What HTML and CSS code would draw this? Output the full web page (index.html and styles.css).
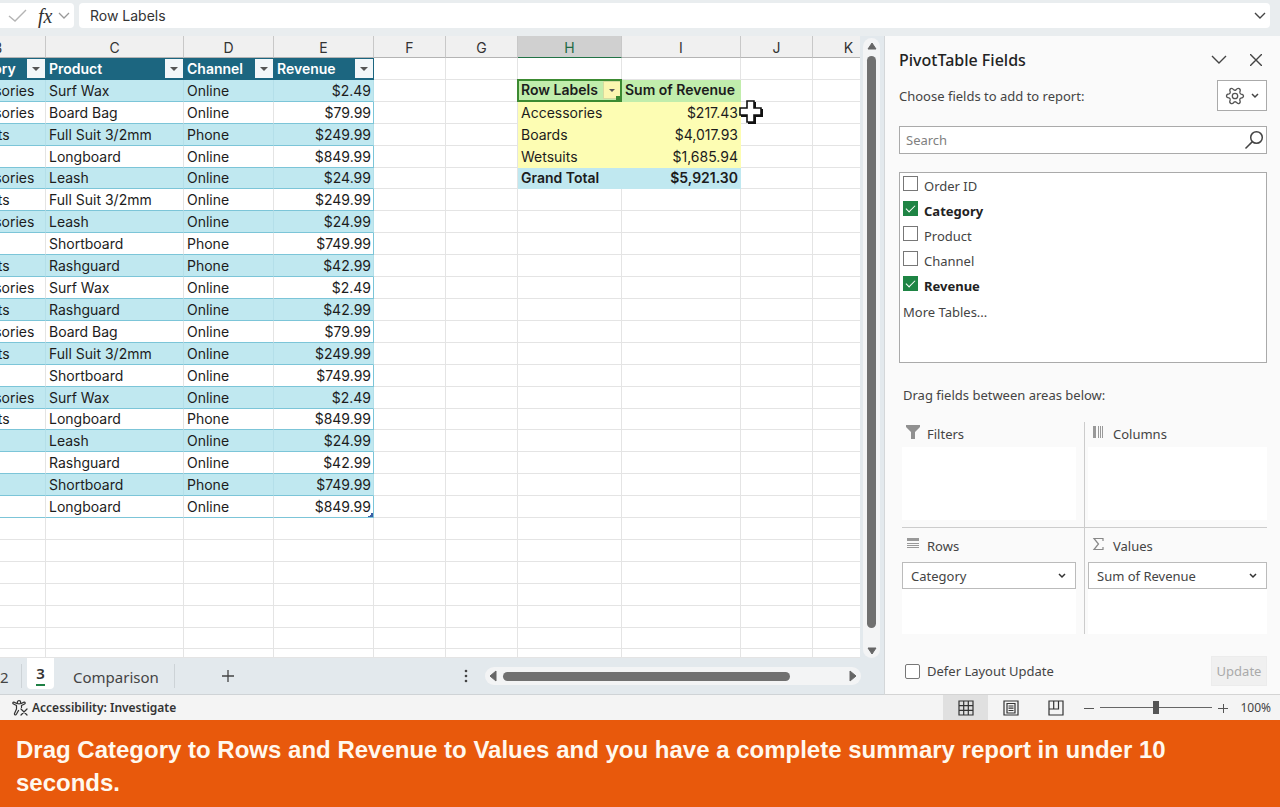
FILE: index.html
```
<!DOCTYPE html>
<html lang="en">
<head>
    <meta charset="utf-8">
    <title>PivotTable Fields</title>
    <link rel="stylesheet" href="styles.css">
</head>
<body>
    <div class="app">
        <header class="formula-bar">
            <div class="formula-bar__tools">
                <button class="icon-button" aria-label="Enter">
                    <svg width="20" height="14" viewBox="0 0 20 14" fill="none" stroke="#b4b4b4" stroke-width="1.4"><path d="M1 7l6 5L18 1"/></svg>
                </button>
                <button class="formula-bar__fx" aria-label="Insert function">fx</button>
                <button class="icon-button" aria-label="More functions">
                    <svg width="12" height="8" viewBox="0 0 12 8" fill="none" stroke="#999" stroke-width="1.3"><path d="M1 1l5 5 5-5"/></svg>
                </button>
            </div>
            <div class="formula-bar__field">
                <input type="text" class="formula-bar__input" value="Row Labels" aria-label="Formula bar">
                <button class="icon-button" aria-label="Expand formula bar">
                    <svg width="12" height="8" viewBox="0 0 12 8" fill="none" stroke="#444" stroke-width="1.4"><path d="M1 1l5 5 5-5"/></svg>
                </button>
            </div>
        </header>

        <div class="workspace">
            <div class="workbook">
                <div class="sheet-area">
                    <div class="sheet-view">
                        <table class="sheet">
                            <colgroup>
                                <col class="sheet__col-b"><col class="sheet__col-c"><col class="sheet__col-d"><col class="sheet__col-e">
                                <col class="sheet__col-std"><col class="sheet__col-std"><col class="sheet__col-h"><col class="sheet__col-i">
                                <col class="sheet__col-std"><col class="sheet__col-std">
                            </colgroup>
                            <thead>
                                <tr><th>B</th><th>C</th><th>D</th><th>E</th><th>F</th><th>G</th><th class="sheet__letter--active">H</th><th>I</th><th>J</th><th>K</th></tr>
                            </thead>
                            <tbody>
                                <tr class="list-head">
                                    <th><div class="list-head__cell">Category<button class="filter" aria-label="Filter Category"></button></div></th>
                                    <th><div class="list-head__cell">Product<button class="filter" aria-label="Filter Product"></button></div></th>
                                    <th><div class="list-head__cell">Channel<button class="filter" aria-label="Filter Channel"></button></div></th>
                                    <th><div class="list-head__cell">Revenue<button class="filter" aria-label="Filter Revenue"></button></div></th>
                                    <td></td><td></td><td></td><td></td><td></td><td></td>
                                </tr>
                                <tr class="list-row list-row--band"><td>Accessories</td><td>Surf Wax</td><td>Online</td><td>$2.49</td><td></td><td></td>
                                    <td class="pivot-head pivot-head--selected"><div class="list-head__cell">Row Labels<button class="filter filter--pivot" aria-label="Filter row labels"></button></div></td>
                                    <td class="pivot-head">Sum of Revenue</td><td></td><td></td></tr>
                                <tr class="list-row"><td>Accessories</td><td>Board Bag</td><td>Online</td><td>$79.99</td><td></td><td></td><td class="pivot">Accessories</td><td class="pivot pivot--num">$217.43</td><td></td><td></td></tr>
                                <tr class="list-row list-row--band"><td>Wetsuits</td><td>Full Suit 3/2mm</td><td>Phone</td><td>$249.99</td><td></td><td></td><td class="pivot">Boards</td><td class="pivot pivot--num">$4,017.93</td><td></td><td></td></tr>
                                <tr class="list-row"><td>Boards</td><td>Longboard</td><td>Online</td><td>$849.99</td><td></td><td></td><td class="pivot">Wetsuits</td><td class="pivot pivot--num">$1,685.94</td><td></td><td></td></tr>
                                <tr class="list-row list-row--band"><td>Accessories</td><td>Leash</td><td>Online</td><td>$24.99</td><td></td><td></td><td class="pivot pivot--total">Grand Total</td><td class="pivot pivot--total pivot--num">$5,921.30</td><td></td><td></td></tr>
                                <tr class="list-row"><td>Wetsuits</td><td>Full Suit 3/2mm</td><td>Online</td><td>$249.99</td><td></td><td></td><td></td><td></td><td></td><td></td></tr>
                                <tr class="list-row list-row--band"><td>Accessories</td><td>Leash</td><td>Online</td><td>$24.99</td><td></td><td></td><td></td><td></td><td></td><td></td></tr>
                                <tr class="list-row"><td>Boards</td><td>Shortboard</td><td>Phone</td><td>$749.99</td><td></td><td></td><td></td><td></td><td></td><td></td></tr>
                                <tr class="list-row list-row--band"><td>Wetsuits</td><td>Rashguard</td><td>Phone</td><td>$42.99</td><td></td><td></td><td></td><td></td><td></td><td></td></tr>
                                <tr class="list-row"><td>Accessories</td><td>Surf Wax</td><td>Online</td><td>$2.49</td><td></td><td></td><td></td><td></td><td></td><td></td></tr>
                                <tr class="list-row list-row--band"><td>Wetsuits</td><td>Rashguard</td><td>Online</td><td>$42.99</td><td></td><td></td><td></td><td></td><td></td><td></td></tr>
                                <tr class="list-row"><td>Accessories</td><td>Board Bag</td><td>Online</td><td>$79.99</td><td></td><td></td><td></td><td></td><td></td><td></td></tr>
                                <tr class="list-row list-row--band"><td>Wetsuits</td><td>Full Suit 3/2mm</td><td>Online</td><td>$249.99</td><td></td><td></td><td></td><td></td><td></td><td></td></tr>
                                <tr class="list-row"><td>Boards</td><td>Shortboard</td><td>Online</td><td>$749.99</td><td></td><td></td><td></td><td></td><td></td><td></td></tr>
                                <tr class="list-row list-row--band"><td>Accessories</td><td>Surf Wax</td><td>Online</td><td>$2.49</td><td></td><td></td><td></td><td></td><td></td><td></td></tr>
                                <tr class="list-row"><td>Wetsuits</td><td>Longboard</td><td>Phone</td><td>$849.99</td><td></td><td></td><td></td><td></td><td></td><td></td></tr>
                                <tr class="list-row list-row--band"><td></td><td>Leash</td><td>Online</td><td>$24.99</td><td></td><td></td><td></td><td></td><td></td><td></td></tr>
                                <tr class="list-row"><td></td><td>Rashguard</td><td>Online</td><td>$42.99</td><td></td><td></td><td></td><td></td><td></td><td></td></tr>
                                <tr class="list-row list-row--band"><td></td><td>Shortboard</td><td>Phone</td><td>$749.99</td><td></td><td></td><td></td><td></td><td></td><td></td></tr>
                                <tr class="list-row"><td></td><td>Longboard</td><td>Online</td><td class="list-row__end">$849.99</td><td></td><td></td><td></td><td></td><td></td><td></td></tr>
                                <tr><td></td><td></td><td></td><td></td><td></td><td></td><td></td><td></td><td></td><td></td></tr>
                                <tr><td></td><td></td><td></td><td></td><td></td><td></td><td></td><td></td><td></td><td></td></tr>
                                <tr><td></td><td></td><td></td><td></td><td></td><td></td><td></td><td></td><td></td><td></td></tr>
                                <tr><td></td><td></td><td></td><td></td><td></td><td></td><td></td><td></td><td></td><td></td></tr>
                                <tr><td></td><td></td><td></td><td></td><td></td><td></td><td></td><td></td><td></td><td></td></tr>
                                <tr><td></td><td></td><td></td><td></td><td></td><td></td><td></td><td></td><td></td><td></td></tr>
                                <tr class="sheet__partial"><td></td><td></td><td></td><td></td><td></td><td></td><td></td><td></td><td></td><td></td></tr>
                            </tbody>
                        </table>
                        <svg class="cell-cursor" width="26" height="27" viewBox="0 0 26 27"><path d="M10 3h8v7h7v8h-7v7h-8v-7H3v-8h7z" fill="#111"/><path d="M9 2h7v7h7v7h-7v7H9v-7H2V9h7z" fill="#fff" stroke="#111" stroke-width="1.6"/></svg>
                    </div>
                    <div class="scroll scroll--vertical">
                        <button class="icon-button" aria-label="Scroll up"><svg width="10" height="8" viewBox="0 0 10 8"><path d="M5 1l4 6H1z" fill="#666" stroke="#666" stroke-linejoin="round"/></svg></button>
                        <div class="scroll__thumb"></div>
                        <button class="icon-button" aria-label="Scroll down"><svg width="10" height="8" viewBox="0 0 10 8"><path d="M5 7l4-6H1z" fill="#666" stroke="#666" stroke-linejoin="round"/></svg></button>
                    </div>
                </div>

                <div class="tab-bar">
                    <nav class="tabs">
                        <button class="tabs__item tabs__item--first">2</button>
                        <button class="tabs__item tabs__item--active"><span class="tabs__name">3</span></button>
                        <button class="tabs__item">Comparison</button>
                    </nav>
                    <button class="icon-button tab-bar__add" aria-label="New sheet">
                        <svg width="14" height="14" viewBox="0 0 14 14" stroke="#444" stroke-width="1.3"><path d="M7 1v12M1 7h12"/></svg>
                    </button>
                    <svg class="tab-bar__grip" width="4" height="14" viewBox="0 0 4 14" fill="#444"><circle cx="2" cy="2" r="1.3"/><circle cx="2" cy="7" r="1.3"/><circle cx="2" cy="12" r="1.3"/></svg>
                    <div class="scroll scroll--horizontal">
                        <button class="icon-button" aria-label="Scroll left"><svg width="8" height="12" viewBox="0 0 8 12"><path d="M1 6l6-5v10z" fill="#666" stroke="#666" stroke-linejoin="round"/></svg></button>
                        <div class="scroll__thumb"></div>
                        <button class="icon-button" aria-label="Scroll right"><svg width="8" height="12" viewBox="0 0 8 12"><path d="M7 6L1 1v10z" fill="#666" stroke="#666" stroke-linejoin="round"/></svg></button>
                    </div>
                </div>
            </div>

            <aside class="panel">
                <div class="panel__header">
                    <h1 class="panel__title">PivotTable Fields</h1>
                    <button class="icon-button" aria-label="Task pane options">
                        <svg width="16" height="10" viewBox="0 0 16 10" fill="none" stroke="#444" stroke-width="1.4"><path d="M1 1l7 7 7-7"/></svg>
                    </button>
                    <button class="icon-button" aria-label="Close">
                        <svg width="12" height="12" viewBox="0 0 12 12" fill="none" stroke="#444" stroke-width="1.4"><path d="M0 0l12 12M12 0L0 12"/></svg>
                    </button>
                </div>
                <div class="panel__intro">
                    <p>Choose fields to add to report:</p>
                    <button class="panel__tools" aria-label="Tools">
                        <svg width="20" height="20" viewBox="0 0 20 20" fill="none" stroke="#555" stroke-width="1.3" stroke-linejoin="round"><path transform="rotate(30 10 10)" d="M7.800 4.200Q8 1.500 10 1.500T12.200 4.200Q12.800 5.500 14.200 5.300Q16.500 4.300 17.400 5.800T16.100 8.900Q15.300 10 16.100 11.100Q18.300 12.600 17.400 14.200T14.200 14.700Q12.800 14.500 12.200 15.800Q12 18.500 10 18.500T7.800 15.800Q7.200 14.500 5.800 14.700Q3.500 15.700 2.600 14.200T3.900 11.100Q4.700 10 3.900 8.900Q1.700 7.400 2.600 5.800T5.800 5.300Q7.200 5.500 7.800 4.200z"/><circle cx="10" cy="10" r="2.700"/></svg>
                        <svg width="8" height="6" viewBox="0 0 8 6" fill="none" stroke="#444" stroke-width="1.5"><path d="M1 1l3 3 3-3"/></svg>
                    </button>
                </div>
                <div class="search">
                    <input type="search" class="search__input" placeholder="Search" aria-label="Search fields">
                    <button class="icon-button" aria-label="Search">
                        <svg width="20" height="20" viewBox="0 0 20 20" fill="none" stroke="#444" stroke-width="1.5"><circle cx="12.500" cy="7.500" r="5.800"/><path d="M8.400 11.600L1.500 18.500"/></svg>
                    </button>
                </div>
                <div class="fields">
                    <label class="fields__item"><input type="checkbox" class="checkbox">Order ID</label>
                    <label class="fields__item fields__item--on"><input type="checkbox" class="checkbox" checked>Category</label>
                    <label class="fields__item"><input type="checkbox" class="checkbox">Product</label>
                    <label class="fields__item"><input type="checkbox" class="checkbox">Channel</label>
                    <label class="fields__item fields__item--on"><input type="checkbox" class="checkbox" checked>Revenue</label>
                    <a class="fields__more" href="#">More Tables...</a>
                </div>
                <p class="panel__hint">Drag fields between areas below:</p>
                <div class="areas">
                    <section class="area">
                        <h2 class="area__title">
                            <svg width="14" height="14" viewBox="0 0 14 14" fill="#909090"><path d="M0 0h14v2L9 7v7H5V7L0 2z"/></svg>Filters
                        </h2>
                        <div class="area__drop"></div>
                    </section>
                    <section class="area">
                        <h2 class="area__title">
                            <svg width="14" height="14" viewBox="0 0 14 14" fill="#999"><path d="M1 1h3v12H1zM6 1h1v12H6zM8 1h1v12H8zM10 1h1v12h-1z"/></svg>Columns
                        </h2>
                        <div class="area__drop"></div>
                    </section>
                    <section class="area">
                        <h2 class="area__title">
                            <svg width="14" height="14" viewBox="0 0 14 14" fill="#999"><path d="M1 1h12v3H1zM1 6h12v1H1zM1 8h12v1H1zM1 10h12v1H1z"/></svg>Rows
                        </h2>
                        <div class="area__drop">
                            <div class="area__field">
                                <select class="area__select" aria-label="Rows field"><option>Category</option></select>
                                <svg class="area__chevron" width="8" height="6" viewBox="0 0 8 6" fill="none" stroke="#333" stroke-width="1.5"><path d="M1 1l3 3 3-3"/></svg>
                            </div>
                        </div>
                    </section>
                    <section class="area">
                        <h2 class="area__title">
                            <svg width="14" height="14" viewBox="0 0 14 14" fill="none" stroke="#888" stroke-width="1.2"><path d="M11 4V1.500H2L6.500 7 2 12.500h9V10"/></svg>Values
                        </h2>
                        <div class="area__drop">
                            <div class="area__field">
                                <select class="area__select" aria-label="Values field"><option>Sum of Revenue</option></select>
                                <svg class="area__chevron" width="8" height="6" viewBox="0 0 8 6" fill="none" stroke="#333" stroke-width="1.5"><path d="M1 1l3 3 3-3"/></svg>
                            </div>
                        </div>
                    </section>
                </div>
                <div class="panel__footer">
                    <label class="defer"><input type="checkbox" class="checkbox checkbox--round">Defer Layout Update</label>
                    <button class="panel__update" disabled>Update</button>
                </div>
            </aside>
        </div>

        <footer class="status-bar">
            <button class="status-bar__check">
                <svg width="16" height="16" viewBox="0 0 16 16" fill="none" stroke="#333" stroke-width="1.2" stroke-linecap="round" stroke-linejoin="round"><circle cx="7" cy="2.300" r="1.700"/><path d="M5.200 3.600L2.200 2.200C.8 1.800.3 3.500 1.500 4L4.500 5.500V9L2.500 13.500c-.4 1.400 1.200 2 1.900.8L6.500 10.500M8.800 3.600l3-1.400c1.400-.4 1.900 1.300.7 1.800L9.500 5.500v2M9 9l6 6M15 9l-6 6"/></svg>
                Accessibility: Investigate
            </button>
            <div class="views">
                <button class="views__item views__item--active" aria-label="Normal view">
                    <svg width="16" height="16" viewBox="0 0 16 16" fill="none" stroke="#333" stroke-width="1.2"><path d="M1 1h14v14H1zM5.700 1v14M10.300 1v14M1 5.700h14M1 10.300h14"/></svg>
                </button>
                <button class="views__item" aria-label="Page layout view">
                    <svg width="16" height="16" viewBox="0 0 16 16" fill="none" stroke="#333" stroke-width="1.2"><path d="M1 1h14v14H1zM4 3.500h8v9.500H4zM5.500 6h5M5.500 8.200h5M5.500 10.500h5"/></svg>
                </button>
                <button class="views__item" aria-label="Page break view">
                    <svg width="16" height="16" viewBox="0 0 16 16" fill="none" stroke="#333" stroke-width="1.2"><path d="M1 1h14v14H1zM1 9h9.500V1M5.700 1v8"/></svg>
                </button>
            </div>
            <div class="zoom">
                <button class="icon-button" aria-label="Zoom out"><svg width="10" height="10" viewBox="0 0 10 10" stroke="#555"><path d="M0 5.500h10"/></svg></button>
                <input type="range" class="zoom__slider" min="0" max="200" value="100" aria-label="Zoom">
                <button class="icon-button" aria-label="Zoom in"><svg width="10" height="10" viewBox="0 0 10 10" stroke="#555"><path d="M0 5.500h10M5.500 1v9"/></svg></button>
                <span class="zoom__value">100%</span>
            </div>
        </footer>

        <p class="caption">Drag Category to Rows and Revenue to Values and you have a complete summary report in under 10 seconds.</p>
    </div>
</body>
</html>
```
FILE: styles.css
```
* {
    margin: 0;
    padding: 0;
    box-sizing: border-box;
}

body {
    font-family: "Noto Sans", sans-serif;
    font-size: 13px;
    color: #444;
}

button,
input,
select {
    font: inherit;
    color: inherit;
    background: none;
    border: none;
    outline: none;
}

svg {
    display: block;
    flex: none;
}

.icon-button {
    display: flex;
    flex: none;
}

.app {
    height: 100vh;
    display: flex;
    flex-direction: column;
    overflow: hidden;
}

/* Formula bar */

.formula-bar {
    display: flex;
    gap: 5px;
    padding: 3px 10px 8px 0;
    background: #e9edef;
}

.formula-bar__tools {
    display: flex;
    align-items: center;
    gap: 10px;
    width: 74px;
    height: 25px;
    padding: 0 2px 0 8px;
    background: #fff;
    border-radius: 0 4px 4px 0;
}

.formula-bar__fx {
    font: italic 400 20px/20px "Liberation Serif", serif;
    color: #333;
}

.formula-bar__tools .formula-bar__fx + .icon-button {
    margin-left: -4px;
}

.formula-bar__field {
    flex: 1;
    display: flex;
    align-items: center;
    height: 25px;
    padding: 0 4px 0 11px;
    background: #fff;
    border-radius: 4px;
}

.formula-bar__input {
    flex: 1;
    font-family: Inter, sans-serif;
    font-size: 14px;
    color: #333;
}

/* Workbook */

.workspace {
    flex: 1;
    min-height: 0;
    display: flex;
}

.workbook {
    flex: 1;
    min-width: 0;
    display: flex;
    flex-direction: column;
    background: #e3e9ed;
}

.sheet-area {
    flex: 1;
    min-height: 0;
    display: flex;
}

.sheet-view {
    flex: 1;
    position: relative;
    overflow: hidden;
    background: #fff;
}

/* The view is scrolled halfway into column B */
.sheet {
    width: 935px;
    height: 100%;
    margin-left: -50px;
    table-layout: fixed;
    border-spacing: 0;
    font-family: Inter, sans-serif;
    font-size: 14px;
    line-height: 18px;
    color: #1c1c1c;
}

.sheet__col-b { width: 96px; }
.sheet__col-c { width: 138px; }
.sheet__col-d { width: 90px; }
.sheet__col-e { width: 100px; }
.sheet__col-std { width: 72px; }
.sheet__col-h { width: 104px; }
.sheet__col-i { width: 119px; }

.sheet tr {
    height: 21px;
}

.sheet thead tr {
    height: 22px;
}

.sheet .sheet__partial {
    height: 8px;
}

.sheet td {
    padding: 1px 3px 0;
    border-right: 1px solid #e4e4e4;
    border-bottom: 1px solid #e4e4e4;
    white-space: nowrap;
}

.sheet thead th {
    padding-top: 2px;
    font-weight: 400;
    color: #333;
    background: #f0f0f0;
    border-right: 1px solid #c8c8c8;
    border-bottom: 1px solid #b4b4b4;
}

.sheet thead .sheet__letter--active {
    color: #1f6b45;
    background: #d0d0d0;
    border-bottom-color: #217346;
}

.list-head th {
    padding: 1px 1px 0 3px;
    font-weight: 600;
    color: #fff;
    background: #1c6680;
    border-bottom: 1px solid #1c6680;
}

.list-head__cell {
    display: flex;
    align-items: center;
    justify-content: space-between;
}

.filter {
    display: flex;
    align-items: center;
    justify-content: center;
    width: 18px;
    height: 19px;
    background: #f3f7f9;
}

.filter::before {
    content: "";
    border: 4px solid transparent;
    border-top-color: #555;
    border-bottom: none;
}

.sheet .list-row td:nth-child(-n+4) {
    border-bottom-color: #7cc5d8;
}

.sheet .list-row td:nth-child(4) {
    padding-right: 2px;
    text-align: right;
    border-right-color: #7cc5d8;
}

.sheet .list-row--band td:nth-child(-n+4) {
    background: #c0e8f0;
    border-right-color: #b4dfe9;
}

.list-row__end {
    background: linear-gradient(135deg, transparent 50%, #3b5fa5 50%) no-repeat right bottom / 5px 5px;
}

.sheet .pivot-head {
    position: relative;
    padding: 0 0 0 3px;
    font-weight: 600;
    background: #c1edac;
    border-color: #c1edac;
}

.sheet .pivot-head--selected::after {
    content: "";
    position: absolute;
    inset: -1px;
    background: linear-gradient(#3c8a32, #3c8a32) no-repeat right bottom / 4px 4px;
    border: 2px solid #3c8a32;
    pointer-events: none;
}

.filter--pivot {
    height: 18px;
    background: #fbf6b0;
    border: 1px solid #d5dca0;
}

.filter--pivot::before {
    border-width: 3px 3px 0;
}

.sheet .pivot {
    background: #fdfdb3;
    border-color: #fdfdb3;
}

.sheet .pivot--total {
    font-weight: 600;
    background: #c0e8f0;
    border-color: #c0e8f0;
}

.sheet .pivot--num {
    padding-right: 2px;
    text-align: right;
}

.cell-cursor {
    position: absolute;
    left: 738px;
    top: 63px;
}

/* Scroll bars */

.scroll {
    display: flex;
    align-items: center;
    background: #f3f4f5;
    border-radius: 9px;
}

.scroll__thumb {
    background: #707070;
    border-radius: 5px;
}

.scroll--vertical {
    flex-direction: column;
    width: 17px;
    margin: 2px 4px 0 3px;
    padding: 4px 0 3px;
}

.scroll--vertical .scroll__thumb {
    flex: 1;
    width: 9px;
    margin: 6px 0 19px;
}

.scroll--horizontal {
    width: 376px;
    height: 18px;
    margin-right: 23px;
    padding: 0 4px;
}

.scroll--horizontal .scroll__thumb {
    flex: 1;
    height: 9px;
    margin: 0 59px 0 6px;
}

/* Sheet tabs */

.tab-bar {
    display: flex;
    align-items: center;
    height: 37px;
    border-bottom: 1px solid #cfd3d6;
}

.tabs {
    display: flex;
    align-self: stretch;
    align-items: center;
    font-size: 15px;
}

.tabs__item {
    height: 24px;
    padding: 2px 15px 0;
    border-right: 1px solid #cdd3d7;
}

.tabs__item--first {
    width: 22px;
    margin-right: 5px;
    padding: 2px 13px 0 0;
}

.tabs__item--active {
    align-self: flex-start;
    width: 27px;
    height: 31px;
    margin-right: 4px;
    padding: 0;
    font-weight: 600;
    color: #333;
    background: #fff;
    border: none;
    border-radius: 0 0 4px 4px;
}

.tabs__name {
    display: inline-block;
    width: 9px;
    line-height: 22px;
    border-bottom: 2px solid #1e8045;
}

.tab-bar__add {
    margin-left: 46px;
}

.tab-bar__grip {
    margin: 0 17px 0 auto;
}

/* Fields panel */

.panel {
    width: 396px;
    display: flex;
    flex-direction: column;
    padding: 12px 13px 8px 14px;
    background: #fafafa;
    border-left: 1px solid #d4d7d9;
    border-bottom: 1px solid #d4d4d4;
}

.panel__header {
    display: flex;
    align-items: center;
    gap: 23px;
    height: 24px;
    padding-right: 5px;
}

.panel__title {
    flex: 1;
    font-size: 16px;
    font-weight: 500;
    color: #222;
}

.panel__intro {
    display: flex;
    align-items: center;
    justify-content: space-between;
    margin-top: 8px;
}

.panel__tools {
    display: flex;
    align-items: center;
    justify-content: center;
    gap: 6px;
    width: 50px;
    height: 31px;
    background: #fff;
    border: 1px solid #aaa;
}

.search {
    display: flex;
    align-items: center;
    height: 28px;
    margin-top: 15px;
    padding: 0 2px 0 6px;
    background: #fff;
    border: 1px solid #aaa;
}

.search__input {
    flex: 1;
}

.search__input::placeholder {
    color: #808080;
}

.fields {
    display: flex;
    flex-direction: column;
    align-items: flex-start;
    height: 191px;
    margin-top: 18px;
    padding: 1px 3px;
    background: #fff;
    border: 1px solid #aaa;
}

.fields__item {
    display: flex;
    align-items: flex-start;
    gap: 6px;
    height: 25px;
    line-height: 25px;
}

.fields__item--on {
    font-weight: 700;
    color: #222;
}

.fields__more {
    line-height: 26px;
    color: inherit;
    text-decoration: none;
}

.checkbox {
    appearance: none;
    flex: none;
    display: grid;
    justify-content: center;
    width: 15px;
    height: 15px;
    margin-top: 2px;
    background: #fff;
    border: 1px solid #777;
}

.checkbox:checked {
    background: #1e8444;
    border-color: #1e8444;
}

.checkbox:checked::before {
    content: "";
    width: 8px;
    height: 4px;
    margin-top: 3px;
    border: solid #fff;
    border-width: 0 0 1px 1px;
    transform: rotate(-45deg);
}

.checkbox--round {
    margin: 0;
    border-radius: 2px;
}

.panel__hint {
    margin: 22px 0 17px 4px;
    line-height: 20px;
}

.areas {
    flex: 1;
    display: grid;
    grid-template: 1fr 1fr / 183px 1fr;
    margin-left: 3px;
}

.area {
    display: flex;
    flex-direction: column;
}

.area:nth-child(odd) {
    padding-right: 8px;
    border-right: 1px solid #ccc;
}

.area:nth-child(even) {
    padding-left: 3px;
}

.area:nth-child(-n+2) {
    padding-bottom: 7px;
    border-bottom: 1px solid #ccc;
}

.area__title {
    display: flex;
    gap: 7px;
    height: 25px;
    padding: 3px 0 0 4px;
    font-size: 13px;
    font-weight: 400;
    line-height: 19px;
}

.area__drop {
    flex: 1;
    background: #fff;
}

.area:nth-child(n+3) .area__title {
    height: 34px;
    padding-top: 9px;
}

.area__field {
    display: flex;
    align-items: center;
    height: 27px;
    background: #fff;
    border: 1px solid #bbb;
}

.area__select {
    appearance: none;
    flex: 1;
    padding: 0 24px 0 8px;
}

.area__chevron {
    margin: 0 9px 0 -17px;
    pointer-events: none;
}

.panel__footer {
    display: flex;
    align-items: center;
    justify-content: space-between;
    margin-top: 22px;
}

.defer {
    display: flex;
    align-items: center;
    gap: 7px;
    padding-left: 6px;
}

.panel__update {
    width: 56px;
    height: 30px;
    color: #aaa;
    background: #f0f0f0;
    border: 1px solid #ececec;
}

/* Status bar */

.status-bar {
    display: flex;
    align-items: center;
    height: 25px;
    padding: 0 9px 0 12px;
    background: #f4f4f4;
}

.status-bar__check {
    display: flex;
    align-items: center;
    gap: 4px;
    margin-right: auto;
    font-size: 12px;
    font-weight: 600;
    color: #333;
}

.views {
    display: flex;
    align-self: stretch;
}

.views__item {
    display: flex;
    align-items: center;
    justify-content: center;
    width: 45px;
}

.views__item--active {
    background: #e0e0e0;
}

.zoom {
    display: flex;
    align-items: center;
    gap: 6px;
    padding-left: 6px;
    font-size: 12px;
}

.zoom__slider {
    appearance: none;
    width: 112px;
    height: 14px;
    background: linear-gradient(#666, #666) no-repeat center / 100% 1px;
}

.zoom__slider::-webkit-slider-thumb {
    appearance: none;
    width: 6px;
    height: 13px;
    background: #555;
}

.zoom__value {
    margin-left: 6px;
}

.caption {
    padding: 13px 16px 8px;
    font: 700 24px/33px "Liberation Sans", Arial, sans-serif;
    color: #fff8ee;
    background: #e8590c;
}
```
